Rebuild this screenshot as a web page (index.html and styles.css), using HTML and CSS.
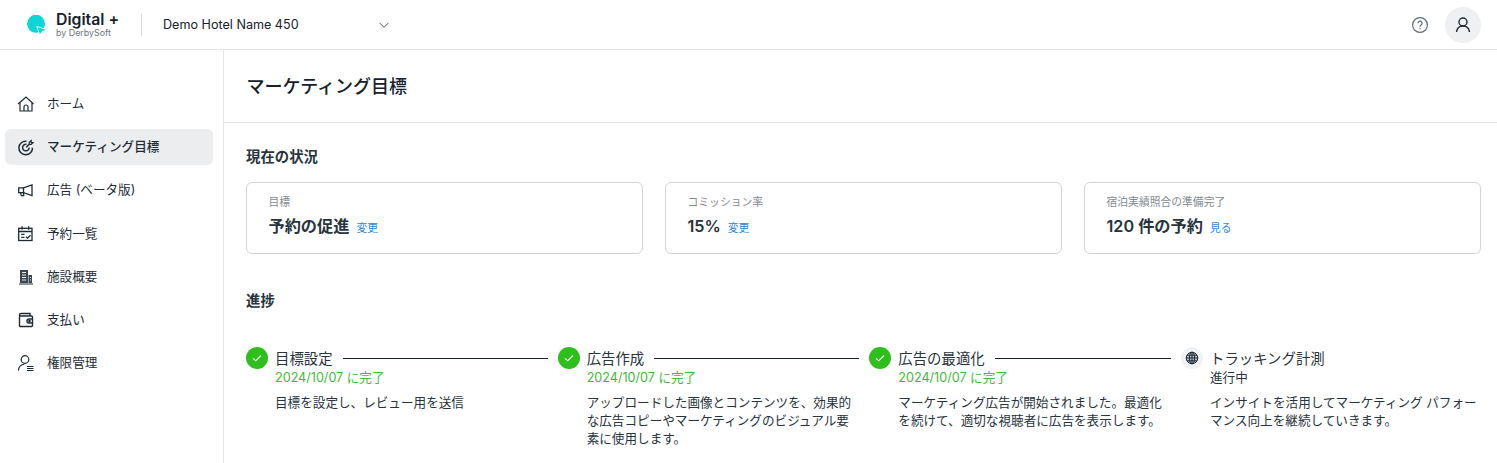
FILE: index.html
```html
<!DOCTYPE html>
<html lang="ja">
<head>
<meta charset="utf-8">
<title>マーケティング目標</title>
<link rel="stylesheet" href="styles.css">
</head>
<body>
<header class="topbar">
  <div class="brand">
    <svg class="logo" width="20" height="20" viewBox="0 0 20 20"><circle cx="9" cy="8.800" r="9" fill="#0fd6d6"/><path d="M10.300 12L19 14.700 15.200 15.900 13 19z" fill="#0fd6d6" stroke="#fff" stroke-width="1.600" stroke-linejoin="round" paint-order="stroke"/></svg>
    <div class="brand-text">
      <div class="brand-name">Digital +</div>
      <div class="brand-sub">by DerbySoft</div>
    </div>
  </div>
  <div class="hotel">
    <span>Demo Hotel Name 450</span>
    <svg width="12" height="12" viewBox="0 0 12 12" fill="none" stroke="#4a5560" stroke-width="1"><path d="M1.500 3.800L6 8.300l4.500-4.500"/></svg>
  </div>
  <div class="top-actions">
    <svg width="18" height="18" viewBox="0 0 18 18" fill="none" stroke="#5f6b75" stroke-width="1.200"><circle cx="9" cy="9" r="7.400"/><path d="M6.900 7.200a2.100 2.100 0 1 1 3.200 1.800c-.8.500-1.100.9-1.100 1.700"/><path d="M9 12.200v1.100"/></svg>
    <div class="avatar"><svg width="18" height="18" viewBox="0 0 18 18" fill="none" stroke="#1d2b36" stroke-width="1.400"><circle cx="9" cy="6" r="4"/><path d="M2.500 16c.5-3.500 3-6 6.500-6s6 2.500 6.500 6"/></svg></div>
  </div>
</header>
<div class="shell">
  <nav class="sidebar">
    <a class="nav-item"><svg width="18" height="18" viewBox="0 0 18 18" fill="none" stroke="#1d2b36" stroke-width="1.200"><path d="M1 9L9 2l7.500 7"/><path d="M3 7.500V16h12V7.500"/><path d="M7 16v-4a2 2 0 0 1 4 0v4"/></svg><span>ホーム</span></a>
    <a class="nav-item active"><svg width="18" height="18" viewBox="0 0 18 18" fill="none" stroke="#1d2b36" stroke-width="1.500"><path d="M9.500 3.200a6.800 6.800 0 1 0 6 6.500"/><path d="M9.500 6.300a3.300 3.300 0 1 0 2.700 3.200"/><path d="M9.200 9.300l3-3"/><path d="M12.200 6.300V4.200l2-1.700v2h1.800l-1.800 1.800z" stroke-width="1.200"/></svg><span>マーケティング目標</span></a>
    <a class="nav-item"><svg width="18" height="18" viewBox="0 0 18 18" fill="none" stroke="#1d2b36" stroke-width="1.300"><path d="M1.700 6.800h4.800L15 4v10.500l-8.500-2.800H1.700z"/><path d="M3.500 11.700l.8 3h2.500l-.4-3"/><path d="M6.500 6.800v4.900"/></svg><span>広告 (ベータ版)</span></a>
    <a class="nav-item"><svg width="18" height="18" viewBox="0 0 18 18" fill="none" stroke="#1d2b36" stroke-width="1.300"><rect x="1.700" y="3.300" width="13.300" height="12.200"/><path d="M1.700 6.500h13.300M5 1.300v3.500M11.700 1.300v3.500"/><path d="M4.200 9.300h3.300M4.200 12.300h3.300M9 11.800l1.500 1.400 3-3"/></svg><span>予約一覧</span></a>
    <a class="nav-item"><svg width="18" height="18" viewBox="0 0 18 18"><path d="M3 2h8v13H3z" fill="#3a4650"/><path d="M11.500 7H15v8h-3.500z" fill="#3a4650"/><path d="M2 15.500h14v1H2z" fill="#1d2b36"/><path d="M5 4.500h4M5 7h4M5 9.500h4M5 12h4" stroke="#fff" stroke-width=".9"/><path d="M13 9.500h1M13 12h1" stroke="#fff" stroke-width=".9"/></svg><span>施設概要</span></a>
    <a class="nav-item"><svg width="18" height="18" viewBox="0 0 18 18" fill="none" stroke="#1d2b36" stroke-width="1.400"><path d="M2.500 5V4a1.500 1.500 0 0 1 1.500-1.500h9V5"/><rect x="2.500" y="5" width="13" height="10.500" rx="1"/><path d="M15.500 8H12a2 2 0 0 0 0 4h3.500"/><circle cx="12.500" cy="10" r=".6"/></svg><span>支払い</span></a>
    <a class="nav-item"><svg width="18" height="18" viewBox="0 0 18 18" fill="none" stroke="#1d2b36" stroke-width="1.200"><circle cx="8" cy="5.500" r="3.800"/><path d="M1.500 16.500c.2-3.500 2.500-6 6-6.500"/><path d="M10 12.500h6.500M10 14.500h6.500M10 16.500h6.500"/></svg><span>権限管理</span></a>
  </nav>
  <main class="content">
    <h1 class="page-title">マーケティング目標</h1>
    <section class="status">
      <h2 class="section-title">現在の状況</h2>
      <div class="cards">
        <div class="card"><div class="card-label">目標</div><div class="card-value"><strong>予約の促進</strong><a class="link">変更</a></div></div>
        <div class="card"><div class="card-label">コミッション率</div><div class="card-value"><strong>15%</strong><a class="link">変更</a></div></div>
        <div class="card"><div class="card-label">宿泊実績照合の準備完了</div><div class="card-value"><strong>120 件の予約</strong><a class="link">見る</a></div></div>
      </div>
    </section>
    <section class="progress">
      <h2 class="section-title">進捗</h2>
      <div class="steps">
        <div class="step">
          <div class="step-head"><span class="dot done"><svg width="12" height="12" viewBox="0 0 12 12" fill="none" stroke="#fff" stroke-width="1.100"><path d="M2 6.300l2.700 2.500L10 3.500"/></svg></span><span class="step-title">目標設定</span><span class="line"></span></div>
          <div class="step-body"><div class="step-date">2024/10/07 に完了</div><p>目標を設定し、レビュー用を送信</p></div>
        </div>
        <div class="step">
          <div class="step-head"><span class="dot done"><svg width="12" height="12" viewBox="0 0 12 12" fill="none" stroke="#fff" stroke-width="1.100"><path d="M2 6.300l2.700 2.500L10 3.500"/></svg></span><span class="step-title">広告作成</span><span class="line"></span></div>
          <div class="step-body"><div class="step-date">2024/10/07 に完了</div><p>アップロードした画像とコンテンツを、効果的な広告コピーやマーケティングのビジュアル要素に使用します。</p></div>
        </div>
        <div class="step">
          <div class="step-head"><span class="dot done"><svg width="12" height="12" viewBox="0 0 12 12" fill="none" stroke="#fff" stroke-width="1.100"><path d="M2 6.300l2.700 2.500L10 3.500"/></svg></span><span class="step-title">広告の最適化</span><span class="line"></span></div>
          <div class="step-body"><div class="step-date">2024/10/07 に完了</div><p>マーケティング広告が開始されました。最適化を続けて、適切な視聴者に広告を表示します。</p></div>
        </div>
        <div class="step last">
          <div class="step-head"><span class="dot pending"><svg width="14" height="14" viewBox="0 0 14 14" fill="none" stroke="#1d2b36" stroke-width="1"><circle cx="7" cy="7" r="5.800" fill="#1d2b36" fill-opacity=".25"/><ellipse cx="7" cy="7" rx="2.600" ry="5.800"/><path d="M1.200 7h11.600M2 4.200h10M2 9.800h10M7 1.200v11.600"/></svg></span><span class="step-title">トラッキング計測</span></div>
          <div class="step-body"><div class="step-status">進行中</div><p>インサイトを活用してマーケティング パフォーマンス向上を継続していきます。</p></div>
        </div>
      </div>
    </section>
  </main>
</div>
</body>
</html>
```
FILE: styles.css
```css
* { box-sizing: border-box; }
html, body { margin: 0; padding: 0; height: 100%; overflow: hidden; background: #fff; }
body { font-family: Inter, "Noto Sans CJK JP", sans-serif; color: #1d2b36; font-size: 12.600px; }
.topbar { height: 50px; border-bottom: 1px solid #e3e5e7; display: flex; align-items: center; padding: 0 16px 0 27px; }
.brand { display: flex; align-items: center; gap: 9px; width: 115px; height: 22px; border-right: 1px solid #d9dbde; }
.logo { flex: none; }
.brand-text { display: flex; flex-direction: column; margin-top: -1px; }
.brand-name { font-size: 15.800px; font-weight: 600; line-height: 17px; color: #14222e; white-space: nowrap; }
.brand-sub { font-size: 8.900px; line-height: 11px; margin-top: -1px; color: #6b747c; white-space: nowrap; }
.hotel { display: flex; align-items: center; justify-content: space-between; width: 227px; margin-left: 21px; font-size: 12.600px; color: #14222e; }
.top-actions { margin-left: auto; display: flex; align-items: center; gap: 16px; }
.avatar { width: 36px; height: 36px; border-radius: 50%; background: #eef0f1; display: flex; align-items: center; justify-content: center; }
.shell { display: flex; height: 413px; }
.sidebar { width: 224px; flex: none; border-right: 1px solid #e3e5e7; padding: 36px 10px 0 5px; display: flex; flex-direction: column; gap: 7.200px; }
.nav-item { height: 36px; display: flex; align-items: center; gap: 12px; padding-left: 12px; border-radius: 6px; font-size: 12.600px; color: #1d2b36; }
.nav-item span { margin-bottom: 3px; }
.nav-item.active { background: #ebedee; font-weight: 500; }
.nav-item svg { flex: none; }
.content { flex: 1; min-width: 0; }
.page-title { margin: 0; height: 73px; border-bottom: 1px solid #e3e5e7; padding: 0 22.500px 2px; display: flex; align-items: center; font-size: 18px; font-weight: 500; color: #14222e; }
.status { padding: 24px 16px 0 22px; }
.section-title { margin: 0; font-size: 14.400px; line-height: 20px; font-weight: 600; color: #27333d; }
.cards { margin-top: 15px; display: grid; grid-template-columns: repeat(3, 1fr); gap: 22px; }
.card { height: 72px; border: 1px solid #d2d4d6; border-radius: 6px; padding: 12px 21.500px; }
.card-label { font-size: 10.800px; line-height: 16px; color: #828a91; }
.card-value { display: flex; align-items: baseline; gap: 7px; margin-top: 4px; }
.card-value strong { font-size: 16.200px; line-height: 22px; font-weight: 600; color: #27333d; }
.link { font-size: 10.800px; color: #2e86de; }
.progress { padding: 37px 16px 0 22px; }
.steps { margin-top: 36px; display: grid; grid-template-columns: repeat(3, 1fr) 300px; }
.step-head { display: flex; align-items: center; gap: 7px; height: 22px; }
.dot { width: 22px; height: 22px; border-radius: 50%; display: flex; align-items: center; justify-content: center; flex: none; }
.dot.done { background: #2fbf1c; }
.dot.pending { background: #f0f2f3; }
.step-title { font-size: 14.400px; margin-bottom: 2px; color: #27333d; white-space: nowrap; }
.line { flex: 1; height: 1px; background: #14222e; margin-left: 3px; margin-right: 10px; }
.step-body { padding: 0 12px 0 29px; }
.last .step-body { padding-right: 0; }
.step-date { font-size: 12.600px; line-height: 18px; color: #43b83a; }
.step-status { font-size: 12.600px; line-height: 18px; color: #27333d; }
.step-body p { margin: 7px 0 0; font-size: 12.600px; line-height: 18px; color: #27333d; }
```
